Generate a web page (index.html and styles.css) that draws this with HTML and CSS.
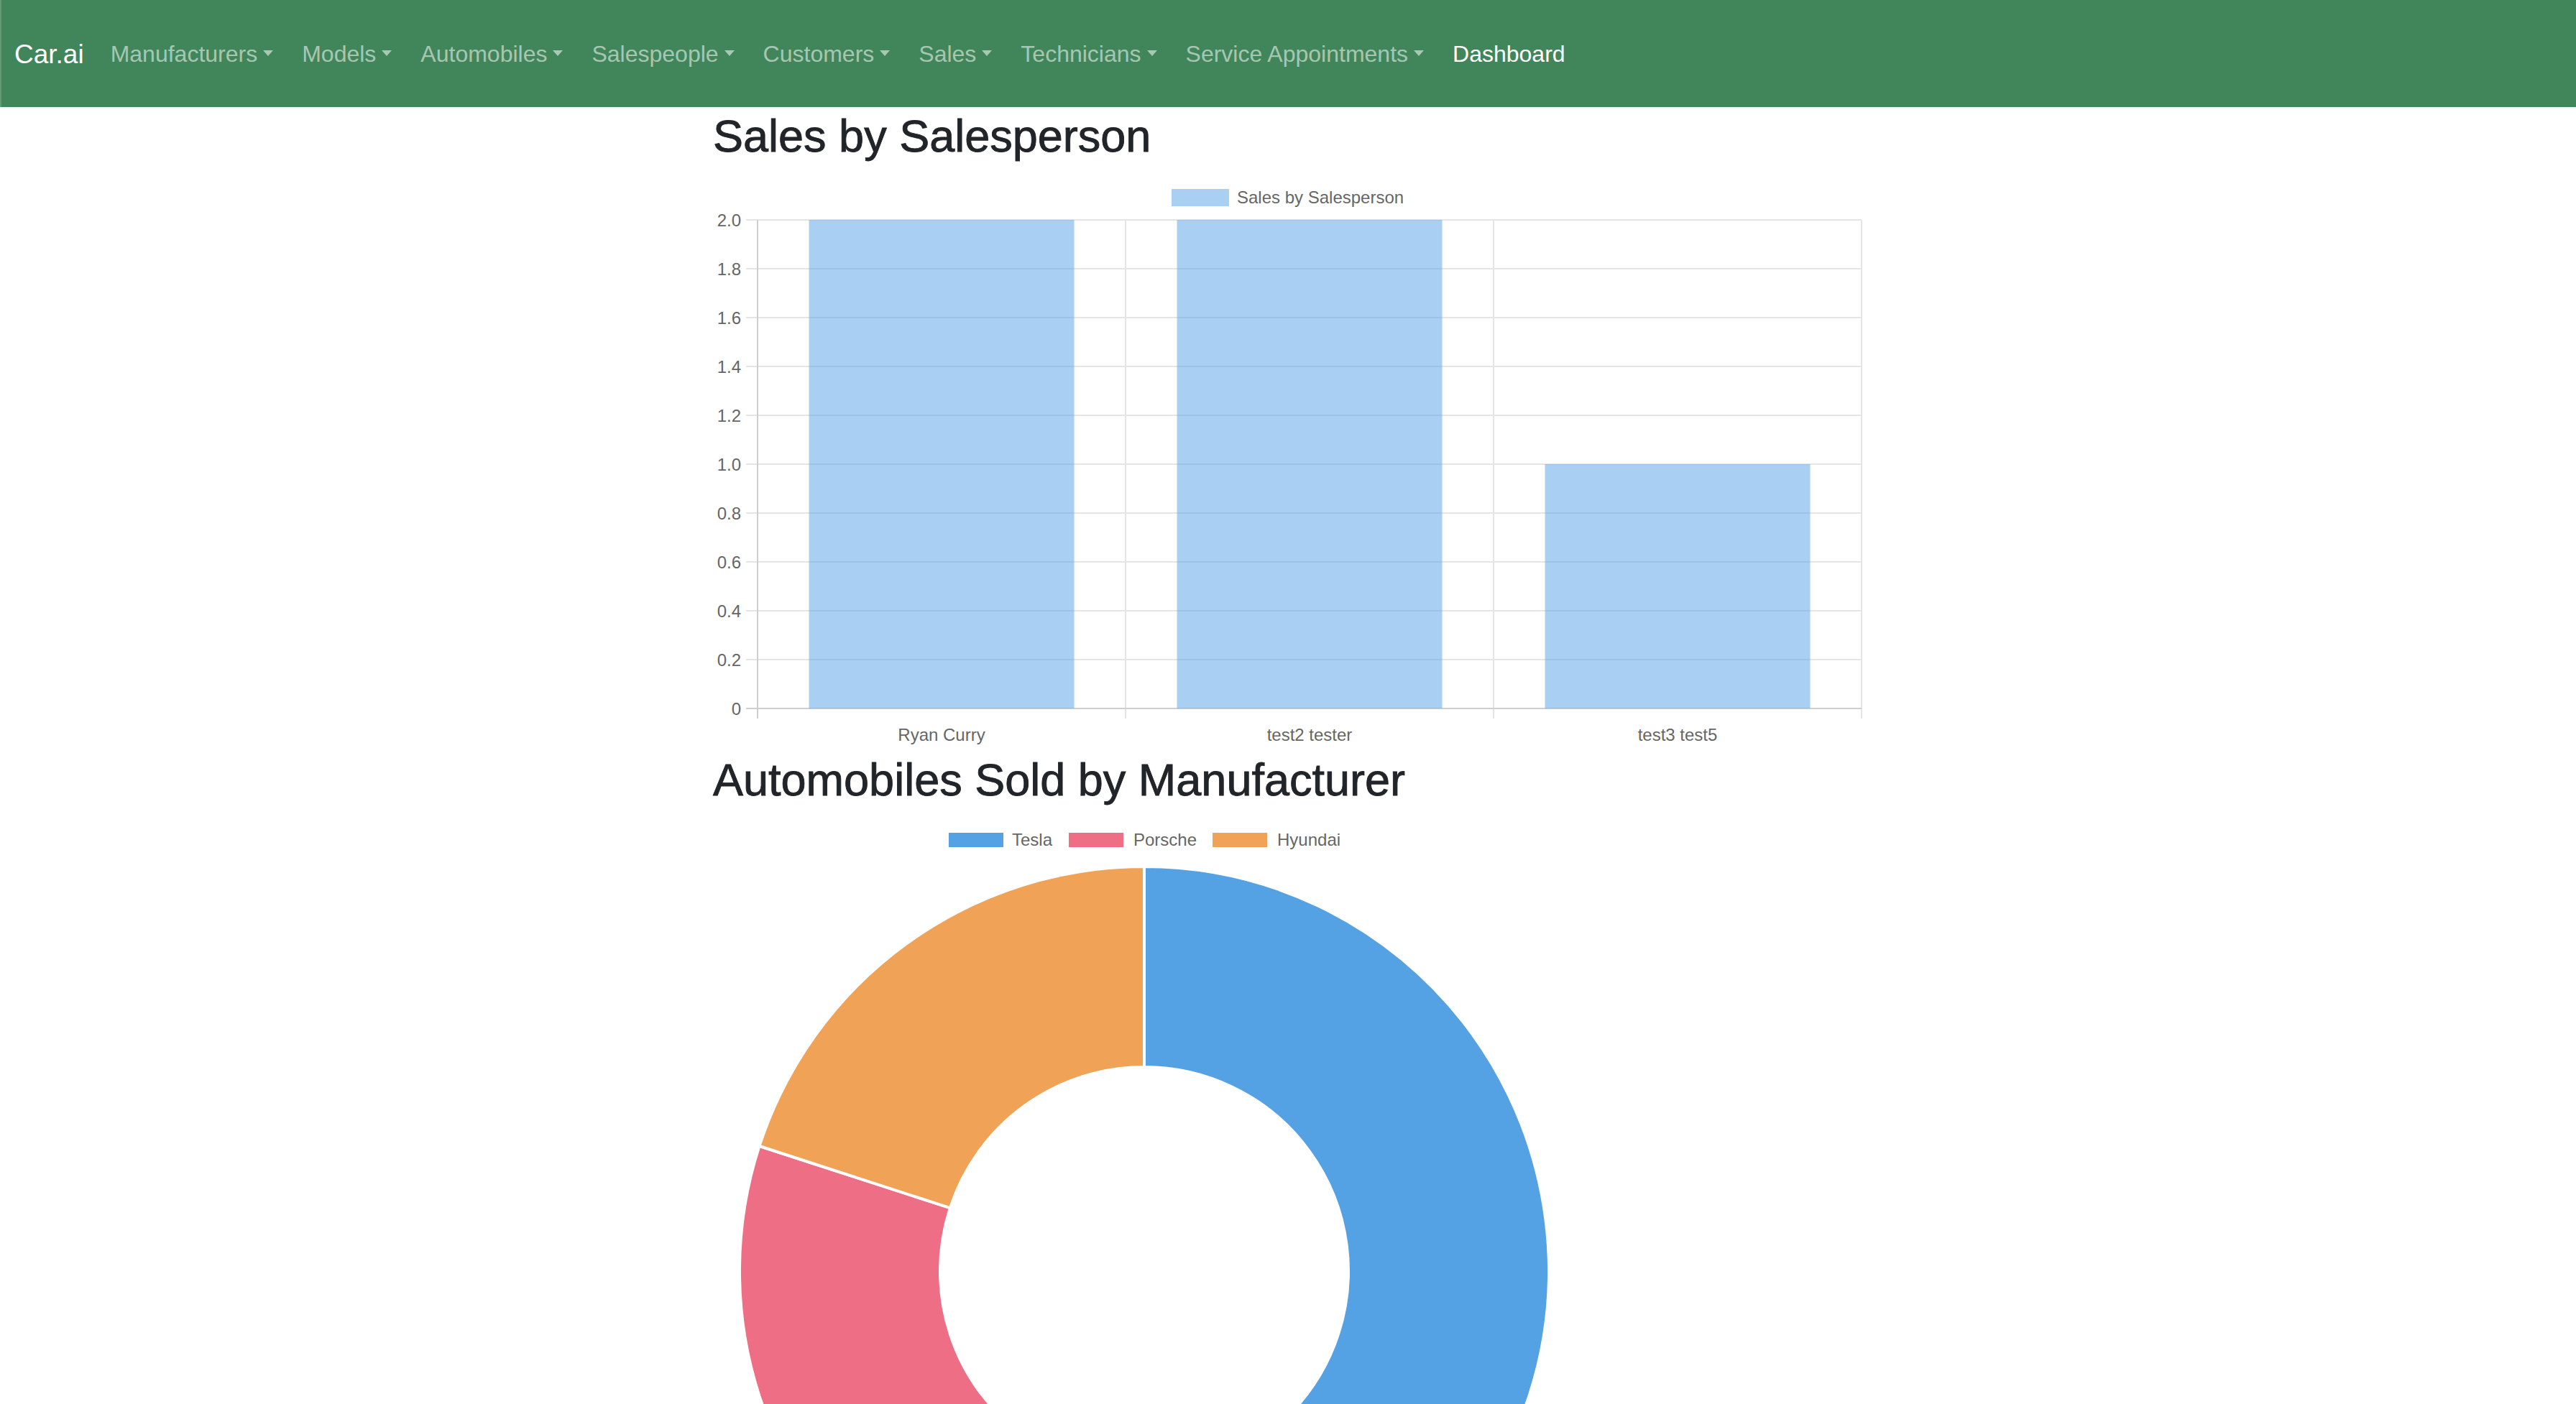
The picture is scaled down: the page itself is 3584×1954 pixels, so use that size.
FILE: index.html
```html
<!DOCTYPE html>
<html lang="en">
<head>
<meta charset="utf-8">
<title>Car.ai Dashboard</title>
<link rel="stylesheet" href="styles.css">
</head>
<body>
<nav class="navbar">
  <a class="brand" href="#">Car.ai</a>
  <ul class="nav">
    <li><a class="nav-link dropdown" href="#">Manufacturers</a></li>
    <li><a class="nav-link dropdown" href="#">Models</a></li>
    <li><a class="nav-link dropdown" href="#">Automobiles</a></li>
    <li><a class="nav-link dropdown" href="#">Salespeople</a></li>
    <li><a class="nav-link dropdown" href="#">Customers</a></li>
    <li><a class="nav-link dropdown" href="#">Sales</a></li>
    <li><a class="nav-link dropdown" href="#">Technicians</a></li>
    <li><a class="nav-link dropdown" href="#">Service Appointments</a></li>
    <li><a class="nav-link active" href="#">Dashboard</a></li>
  </ul>
</nav>
<main class="container">
  <h2 class="title">Sales by Salesperson</h2>
  <svg class="chart bar-chart" width="1600" height="817" viewBox="0 0 1600 817">
    <rect class="bar" x="638" y="35" width="80" height="24"/>
    <text class="legend-text" x="729" y="55">Sales by Salesperson</text>
    <g class="grid">
      <line x1="46" x2="1598" y1="78" y2="78"/>
      <line x1="46" x2="1598" y1="146" y2="146"/>
      <line x1="46" x2="1598" y1="214" y2="214"/>
      <line x1="46" x2="1598" y1="282" y2="282"/>
      <line x1="46" x2="1598" y1="350" y2="350"/>
      <line x1="46" x2="1598" y1="418" y2="418"/>
      <line x1="46" x2="1598" y1="486" y2="486"/>
      <line x1="46" x2="1598" y1="554" y2="554"/>
      <line x1="46" x2="1598" y1="622" y2="622"/>
      <line x1="46" x2="1598" y1="690" y2="690"/>
      <line x1="574" x2="574" y1="78" y2="772"/>
      <line x1="1086" x2="1086" y1="78" y2="772"/>
      <line x1="1598" x2="1598" y1="78" y2="772"/>
    </g>
    <g class="axis">
      <line x1="62" x2="62" y1="78" y2="772"/>
      <line x1="46" x2="1598" y1="758" y2="758"/>
    </g>
    <rect class="bar" x="133.5" y="78" width="369" height="680"/>
    <rect class="bar" x="645.5" y="78" width="369" height="680"/>
    <rect class="bar" x="1157.5" y="418" width="369" height="340"/>
    <g class="tick-label y-label">
      <text x="39" y="86.5">2.0</text>
      <text x="39" y="154.5">1.8</text>
      <text x="39" y="222.5">1.6</text>
      <text x="39" y="290.5">1.4</text>
      <text x="39" y="358.5">1.2</text>
      <text x="39" y="426.5">1.0</text>
      <text x="39" y="494.5">0.8</text>
      <text x="39" y="562.5">0.6</text>
      <text x="39" y="630.5">0.4</text>
      <text x="39" y="698.5">0.2</text>
      <text x="39" y="766.5">0</text>
    </g>
    <g class="tick-label x-label">
      <text x="318" y="803">Ryan Curry</text>
      <text x="830" y="803">test2 tester</text>
      <text x="1342" y="803">test3 test5</text>
    </g>
  </svg>
  <h2 class="title">Automobiles Sold by Manufacturer</h2>
  <svg class="chart doughnut" width="1600" height="1220" viewBox="0 0 1600 1220">
    <rect class="tesla" x="328" y="36" width="76" height="20"/>
    <text class="legend-text" x="416" y="54">Tesla</text>
    <rect class="porsche" x="495" y="36" width="76" height="20"/>
    <text class="legend-text" x="585" y="54">Porsche</text>
    <rect class="hyundai" x="695" y="36" width="76" height="20"/>
    <text class="legend-text" x="785" y="54">Hyundai</text>
    <path class="slice tesla" d="M600,83 A563,563 0 1 1 269.1,1101.5 L433.1,875.8 A284,284 0 1 0 600,362 Z"/>
    <path class="slice porsche" d="M269.1,1101.5 A563,563 0 0 1 64.5,472 L329.9,558.2 A284,284 0 0 0 433.1,875.8 Z"/>
    <path class="slice hyundai" d="M64.5,472 A563,563 0 0 1 600,83 L600,362 A284,284 0 0 0 329.9,558.2 Z"/>
  </svg>
</main>
</body>
</html>
```

FILE: styles.css
```css
html {
  overflow: hidden;
}

body {
  margin: 0;
  background: #ffffff;
  font-family: "Liberation Sans", Arial, sans-serif;
  color: #212529;
}

.navbar {
  display: flex;
  align-items: center;
  height: 149px;
  padding: 0 20px;
  background: #41865a;
  box-shadow: inset 2px 0 0 rgba(255, 255, 255, 0.18);
}

.brand {
  font-size: 37px;
  line-height: 1.5;
  color: #ffffff;
  text-decoration: none;
  margin-right: 17px;
  padding-top: 3px;
}

.nav {
  display: flex;
  list-style: none;
  margin: 0;
  padding: 0;
}

.nav-link {
  display: block;
  padding: 0 20px;
  font-size: 32px;
  line-height: 1.5;
  color: rgba(255, 255, 255, 0.55);
  text-decoration: none;
}

.nav-link.active {
  color: #ffffff;
}

.dropdown::after {
  content: "";
  display: inline-block;
  margin-left: 8px;
  vertical-align: 8px;
  border-top: 8px solid currentColor;
  border-left: 7px solid transparent;
  border-right: 7px solid transparent;
}

.container {
  width: 1600px;
  margin: 0 auto;
}

.title {
  margin: 3px 0 0;
  font-size: 63px;
  font-weight: 400;
  line-height: 1.2;
  color: #212529;
  -webkit-text-stroke: 0.9px #212529;
}

.chart {
  display: block;
  font-family: "Liberation Sans", Arial, sans-serif;
}

.legend-text,
.tick-label text {
  font-size: 24px;
  fill: #666666;
}

.y-label text {
  text-anchor: end;
}

.x-label text {
  text-anchor: middle;
}

.grid line {
  stroke: #e5e5e5;
  stroke-width: 2;
}

.axis line {
  stroke: #cfcfcf;
  stroke-width: 2;
}

.bar {
  fill: rgba(99, 168, 231, 0.55);
}

.tesla {
  fill: #54a1e4;
}

.porsche {
  fill: #ee6e85;
}

.hyundai {
  fill: #f0a356;
}

.slice {
  stroke: #ffffff;
  stroke-width: 4;
  stroke-linejoin: round;
}
```
